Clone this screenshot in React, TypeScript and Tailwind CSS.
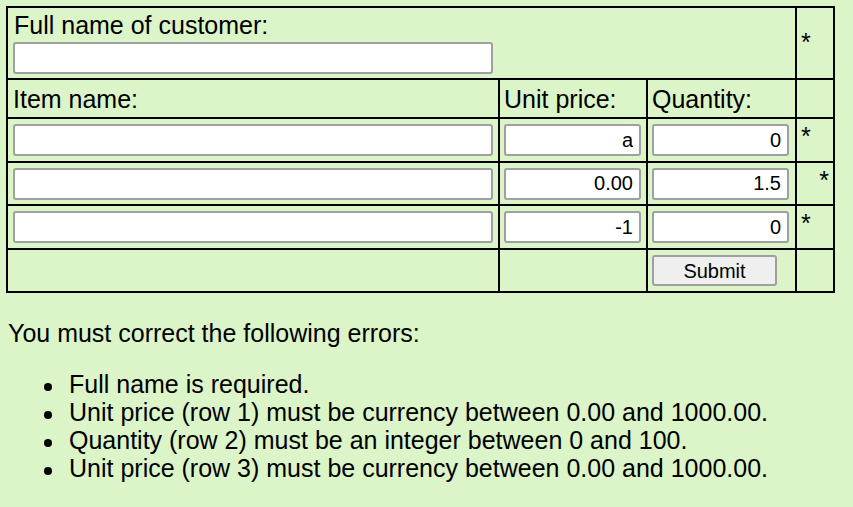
import React from "react";

const cell = "border border-black p-0";
const field =
  "h-[32px] bg-white border-2 border-[#a0a0a0] rounded-[3px] text-[20px] text-black text-right pr-[6px] outline-none";

const errors = [
  "Full name is required.",
  "Unit price (row 1) must be currency between 0.00 and 1000.00.",
  "Quantity (row 2) must be an integer between 0 and 100.",
  "Unit price (row 3) must be currency between 0.00 and 1000.00.",
];

const items = [
  { price: "a", qty: "0", star: "left" },
  { price: "0.00", qty: "1.5", star: "right" },
  { price: "-1", qty: "0", star: "left" },
];

const App: React.FC = () => {
  return (
    <div
      className="min-h-screen bg-[#dbf4c8] text-black pt-[6px] pl-[6px] text-[25px] leading-[28px]"
      style={{ fontFamily: '"Liberation Sans", Arial, sans-serif' }}
    >
      {/* Order form */}
      <table className="table-fixed border-separate border-spacing-0 border border-black w-[829px]">
        <colgroup>
          <col className="w-[492px]" />
          <col className="w-[148px]" />
          <col className="w-[149px]" />
          <col className="w-[38px]" />
        </colgroup>
        <tbody>
          <tr>
            <td colSpan={3} className={`${cell} align-top`}>
              <div className="h-[70px] pl-[5px] pt-[3px]">
                <div className="h-[28px] pl-px">Full name of customer:</div>
                <input
                  type="text"
                  defaultValue=""
                  className={`${field} w-[480px] mt-[3px]`}
                />
              </div>
            </td>
            <td className={`${cell} align-middle`}>
              <div className="pl-[4px] -mt-[3px]">*</div>
            </td>
          </tr>
          <tr>
            <td className={cell}>
              <div className="h-[37px] flex items-center pl-[5px]">Item name:</div>
            </td>
            <td className={cell}>
              <div className="h-[37px] flex items-center pl-[4px]">Unit price:</div>
            </td>
            <td className={cell}>
              <div className="h-[37px] flex items-center pl-[4px]">Quantity:</div>
            </td>
            <td className={cell}>
              <div className="h-[37px]" />
            </td>
          </tr>
          {items.map((it, i) => (
            <tr key={i}>
              <td className={cell}>
                <div className={`${i === 1 ? "h-[41px]" : "h-[42px]"} flex items-center pl-[5px]`}>
                  <input type="text" defaultValue="" className={`${field} w-[480px]`} />
                </div>
              </td>
              <td className={cell}>
                <div className={`${i === 1 ? "h-[41px]" : "h-[42px]"} flex items-center pl-[4px]`}>
                  <input type="text" defaultValue={it.price} className={`${field} w-[137px]`} />
                </div>
              </td>
              <td className={cell}>
                <div className={`${i === 1 ? "h-[41px]" : "h-[42px]"} flex items-center pl-[4px]`}>
                  <input type="text" defaultValue={it.qty} className={`${field} w-[137px]`} />
                </div>
              </td>
              <td className={`${cell} align-top`}>
                <div
                  className={
                    it.star === "right"
                      ? "h-[41px] pt-[3px] pr-[4px] text-right"
                      : "h-[42px] pt-[3px] pl-[4px]"
                  }
                >
                  *
                </div>
              </td>
            </tr>
          ))}
          <tr>
            <td className={cell}>
              <div className="h-[41px]" />
            </td>
            <td className={cell}>
              <div className="h-[41px]" />
            </td>
            <td className={cell}>
              <div className="h-[41px] flex items-center pl-[4px]">
                <button
                  type="submit"
                  className="w-[125px] h-[31px] bg-[#efefef] border-2 border-[#a0a0a0] rounded-[3px] text-[20px] leading-none text-black"
                >
                  Submit
                </button>
              </div>
            </td>
            <td className={cell}>
              <div className="h-[41px]" />
            </td>
          </tr>
        </tbody>
      </table>

      {/* Validation errors */}
      <p className="mt-[26px] pl-[2px]">You must correct the following errors:</p>
      <ul className="mt-[23px]">
        {errors.map((e) => (
          <li key={e} className="flex items-start">
            <span className="mt-[13px] ml-[38px] w-[8px] h-[8px] rounded-full bg-black shrink-0" />
            <span className="ml-[17px]">{e}</span>
          </li>
        ))}
      </ul>
    </div>
  );
};

export default App;
